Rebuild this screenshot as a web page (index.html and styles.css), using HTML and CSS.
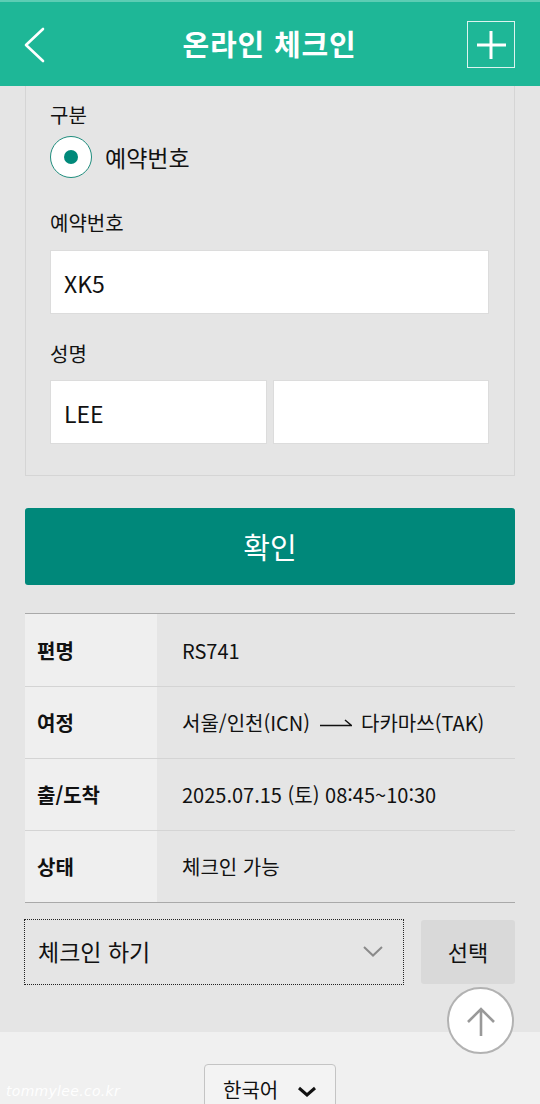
FILE: index.html
```html
<!DOCTYPE html>
<html lang="ko">
<head>
<meta charset="utf-8">
<title>온라인 체크인</title>
<link rel="stylesheet" href="styles.css">
</head>
<body>
<header class="topbar">
  <a class="back" href="#" aria-label="뒤로">
    <svg width="22" height="36" viewBox="0 0 22 36"><polyline points="19,2 2,18 19,34" fill="none" stroke="#fff" stroke-width="2.6" stroke-linecap="round" stroke-linejoin="round"/></svg>
  </a>
  <h1 class="title">온라인 체크인</h1>
  <a class="plus" href="#" aria-label="추가">
    <svg width="32" height="32" viewBox="0 0 32 32"><path d="M2 16H31M16 2V30" stroke="#fff" stroke-width="3"/></svg>
  </a>
</header>

<main class="content">
  <section class="form-box">
    <div class="label label-first">구분</div>
    <div class="radio-row">
      <span class="radio"><span class="dot"></span></span>
      <span class="radio-text">예약번호</span>
    </div>
    <div class="label label-mid">예약번호</div>
    <input class="field" type="text" value="XK5">
    <div class="label label-name">성명</div>
    <div class="name-row">
      <input class="field" type="text" value="LEE">
      <input class="field" type="text" value="">
    </div>
  </section>

  <button class="confirm" type="button">확인</button>

  <div class="info">
    <div class="info-row"><div class="info-key">편명</div><div class="info-val">RS741</div></div>
    <div class="info-row"><div class="info-key">여정</div><div class="info-val">서울/인천(ICN)<svg class="arrow" width="32" height="10" viewBox="0 0 32 10"><path d="M0 8.5H31.5L25 3" fill="none" stroke="#111" stroke-width="1.5"/></svg>다카마쓰(TAK)</div></div>
    <div class="info-row"><div class="info-key">출/도착</div><div class="info-val">2025.07.15 (토) 08:45~10:30</div></div>
    <div class="info-row"><div class="info-key">상태</div><div class="info-val">체크인 가능</div></div>
  </div>

  <div class="action-row">
    <div class="select">
      <span>체크인 하기</span>
      <svg width="20" height="11" viewBox="0 0 20 11"><polyline points="1,1 10,9.5 19,1" fill="none" stroke="#8a8a8a" stroke-width="2"/></svg>
    </div>
    <button class="choose" type="button">선택</button>
  </div>
</main>

<footer class="footer">
  <div class="lang">
    <span>한국어</span>
    <svg width="20" height="11" viewBox="0 0 20 11"><polyline points="2,2 10,9 18,2" fill="none" stroke="#111" stroke-width="3"/></svg>
  </div>
  <span class="watermark">tommylee.co.kr</span>
</footer>

<a class="to-top" href="#" aria-label="맨 위로">
  <svg width="32" height="32" viewBox="0 0 32 32"><path d="M16 4V31M3 17L16 4L29 17" fill="none" stroke="#999" stroke-width="2.6"/></svg>
</a>
</body>
</html>
```

FILE: styles.css
```css
* { box-sizing: border-box; }

html, body {
  margin: 0;
  padding: 0;
}

body {
  position: relative;
  background: #e5e5e5;
  font-family: "Noto Sans CJK KR", "Noto Sans", sans-serif;
  color: #111;
  width: 540px;
  min-height: 1104px;
}

.topbar {
  height: 86px;
  background: #1eb797;
  border-top: 2px solid #5ccdb4;
  display: grid;
  grid-template-columns: 1fr auto 1fr;
  align-items: center;
  padding: 0 25px 0 24px;
}

.back {
  display: flex;
  align-items: center;
  justify-self: start;
  margin-top: 1px;
}

.title {
  margin: 0;
  color: #fff;
  font-size: 29px;
  font-weight: 700;
  letter-spacing: 0.8px;
  line-height: 1;
  padding-bottom: 2px;
}

.plus {
  justify-self: end;
  width: 48px;
  height: 47px;
  border: 1.5px solid rgba(255, 255, 255, 0.85);
  display: flex;
  align-items: center;
  justify-content: center;
  margin-top: 1px;
}

.content {
  padding: 0 25px 47px;
}

.form-box {
  border: 1px solid #d5d5d5;
  border-top: none;
  padding: 16px 25px 31px 24px;
}

.label {
  font-size: 20px;
  line-height: 26px;
}

.label-mid { margin-top: 32px; }
.label-name { margin-top: 27px; }

.radio-row {
  margin-top: 8px;
  height: 42px;
  display: flex;
  align-items: center;
}

.radio {
  width: 42px;
  height: 42px;
  border-radius: 50%;
  border: 1px solid #1f8d7d;
  background: #fff;
  display: flex;
  align-items: center;
  justify-content: center;
}

.dot {
  width: 14px;
  height: 14px;
  border-radius: 50%;
  background: #00897a;
}

.radio-text {
  margin-left: 13px;
  font-size: 23px;
  line-height: 1;
}

.field {
  display: block;
  width: 100%;
  height: 64px;
  margin: 14px 0 0;
  padding: 2px 13px 0;
  border: 1px solid #dcdcdc;
  background: #fff;
  font-family: inherit;
  font-size: 23px;
  color: #111;
  outline: none;
}

.name-row {
  display: flex;
  gap: 6px;
  margin-top: 13px;
}

.name-row .field {
  margin: 0;
  flex: 1;
  min-width: 0;
}

.confirm {
  display: block;
  width: 100%;
  height: 77px;
  margin-top: 32px;
  border: none;
  border-radius: 3px;
  background: #00887a;
  color: #fff;
  font-family: inherit;
  font-size: 29px;
  padding: 0 0 2px;
}

.info {
  margin-top: 28px;
  border-top: 1px solid #a9a9a9;
  border-bottom: 1px solid #a9a9a9;
}

.info-row {
  display: grid;
  grid-template-columns: 132px 1fr;
  height: 72px;
}

.info-row + .info-row {
  border-top: 1px solid #d4d4d4;
}

.info-key {
  background: #efefef;
  font-weight: 700;
  font-size: 20px;
  display: flex;
  align-items: center;
  padding-left: 12px;
}

.info-val {
  font-size: 20px;
  display: flex;
  align-items: center;
  padding-left: 25px;
  white-space: nowrap;
}

.arrow {
  margin: 0 9px 0 10px;
  position: relative;
  top: -1px;
}

.action-row {
  margin-top: 16px;
  display: flex;
  align-items: center;
  gap: 17px;
}

.select {
  flex: 1;
  height: 66px;
  margin-left: -1px;
  border: 1px dotted #222;
  display: flex;
  align-items: center;
  justify-content: space-between;
  padding: 0 20px 2px 13px;
  font-size: 23px;
}

.choose {
  width: 94px;
  height: 64px;
  border: none;
  border-radius: 3px;
  background: #d9d9d9;
  font-family: inherit;
  font-size: 22px;
  color: #111;
  padding: 0 0 2px;
}

.footer {
  background: #f0f0f0;
  padding-top: 32px;
  height: 73px;
  overflow: hidden;
  display: flex;
  justify-content: center;
}

.lang {
  width: 132px;
  height: 52px;
  border: 1px solid #c4c4c4;
  border-radius: 4px;
  background: #f3f3f3;
  display: flex;
  align-items: flex-start;
  padding: 12px 0 0 18px;
  gap: 19px;
  font-size: 20px;
  line-height: 26px;
}

.lang svg {
  margin-top: 9px;
}

.watermark {
  position: absolute;
  left: 6px;
  bottom: 6px;
  font-family: "DejaVu Sans", sans-serif;
  font-style: italic;
  font-size: 14px;
  color: rgba(255, 255, 255, 0.95);
  letter-spacing: 0.3px;
}

.to-top {
  position: absolute;
  left: 447px;
  top: 987px;
  width: 67px;
  height: 67px;
  border-radius: 50%;
  background: #fff;
  border: 2px solid #b2b2b2;
  display: flex;
  align-items: center;
  justify-content: center;
}
```
